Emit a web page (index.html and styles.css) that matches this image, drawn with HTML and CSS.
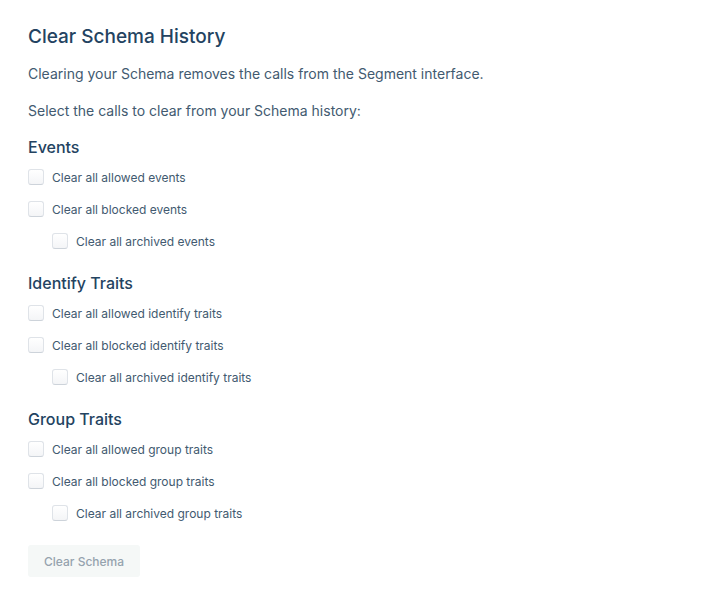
FILE: index.html
```html
<!DOCTYPE html>
<html lang="en">
<head>
<meta charset="utf-8">
<title>Clear Schema History</title>
<link rel="stylesheet" href="styles.css">
</head>
<body>
<main class="page">
  <h1 class="title">Clear Schema History</h1>
  <p class="text">Clearing your Schema removes the calls from the Segment interface.</p>
  <p class="text">Select the calls to clear from your Schema history:</p>
  <form class="form">
    <section class="group">
      <h2 class="heading">Events</h2>
      <label class="option"><input class="check" type="checkbox">Clear all allowed events</label>
      <label class="option"><input class="check" type="checkbox">Clear all blocked events</label>
      <label class="option nested"><input class="check" type="checkbox">Clear all archived events</label>
    </section>
    <section class="group">
      <h2 class="heading">Identify Traits</h2>
      <label class="option"><input class="check" type="checkbox">Clear all allowed identify traits</label>
      <label class="option"><input class="check" type="checkbox">Clear all blocked identify traits</label>
      <label class="option nested"><input class="check" type="checkbox">Clear all archived identify traits</label>
    </section>
    <section class="group">
      <h2 class="heading">Group Traits</h2>
      <label class="option"><input class="check" type="checkbox">Clear all allowed group traits</label>
      <label class="option"><input class="check" type="checkbox">Clear all blocked group traits</label>
      <label class="option nested"><input class="check" type="checkbox">Clear all archived group traits</label>
    </section>
    <button class="button" type="submit" disabled>Clear Schema</button>
  </form>
</main>
</body>
</html>
```
FILE: styles.css
```css
body {
  margin: 0;
  background: #fff;
  color: #425a70;
  font-family: Inter, "Liberation Sans", sans-serif;
}

.page {
  padding: 24px 28px;
}

.title {
  margin: 0 0 13px;
  color: #234361;
  font-size: 19px;
  font-weight: 500;
  line-height: 26px;
}

.text {
  margin: 0 0 16px;
  font-size: 14px;
  line-height: 21px;
}

.heading {
  margin: 0 0 4px;
  color: #234361;
  font-size: 16px;
  font-weight: 500;
  line-height: 20px;
}

.group {
  display: flex;
  flex-direction: column;
  align-items: flex-start;
  margin-bottom: 16px;
}

.option {
  display: flex;
  align-items: center;
  gap: 8px;
  height: 32px;
  color: #425a70;
  font-size: 12px;
  line-height: 17px;
}

.nested {
  margin-left: 24px;
}

.check {
  appearance: none;
  width: 16px;
  height: 16px;
  margin: 0;
  border: 1px solid #dfe3e8;
  border-bottom-color: #cdd3da;
  border-radius: 3px;
  background: linear-gradient(#fff, #f4f5f7);
}

.button {
  height: 32px;
  padding: 0 16px;
  border: 0;
  border-radius: 3px;
  background: #f5f8f7;
  color: #95a3ae;
  font-family: inherit;
  font-size: 12px;
  font-weight: 500;
}
```
